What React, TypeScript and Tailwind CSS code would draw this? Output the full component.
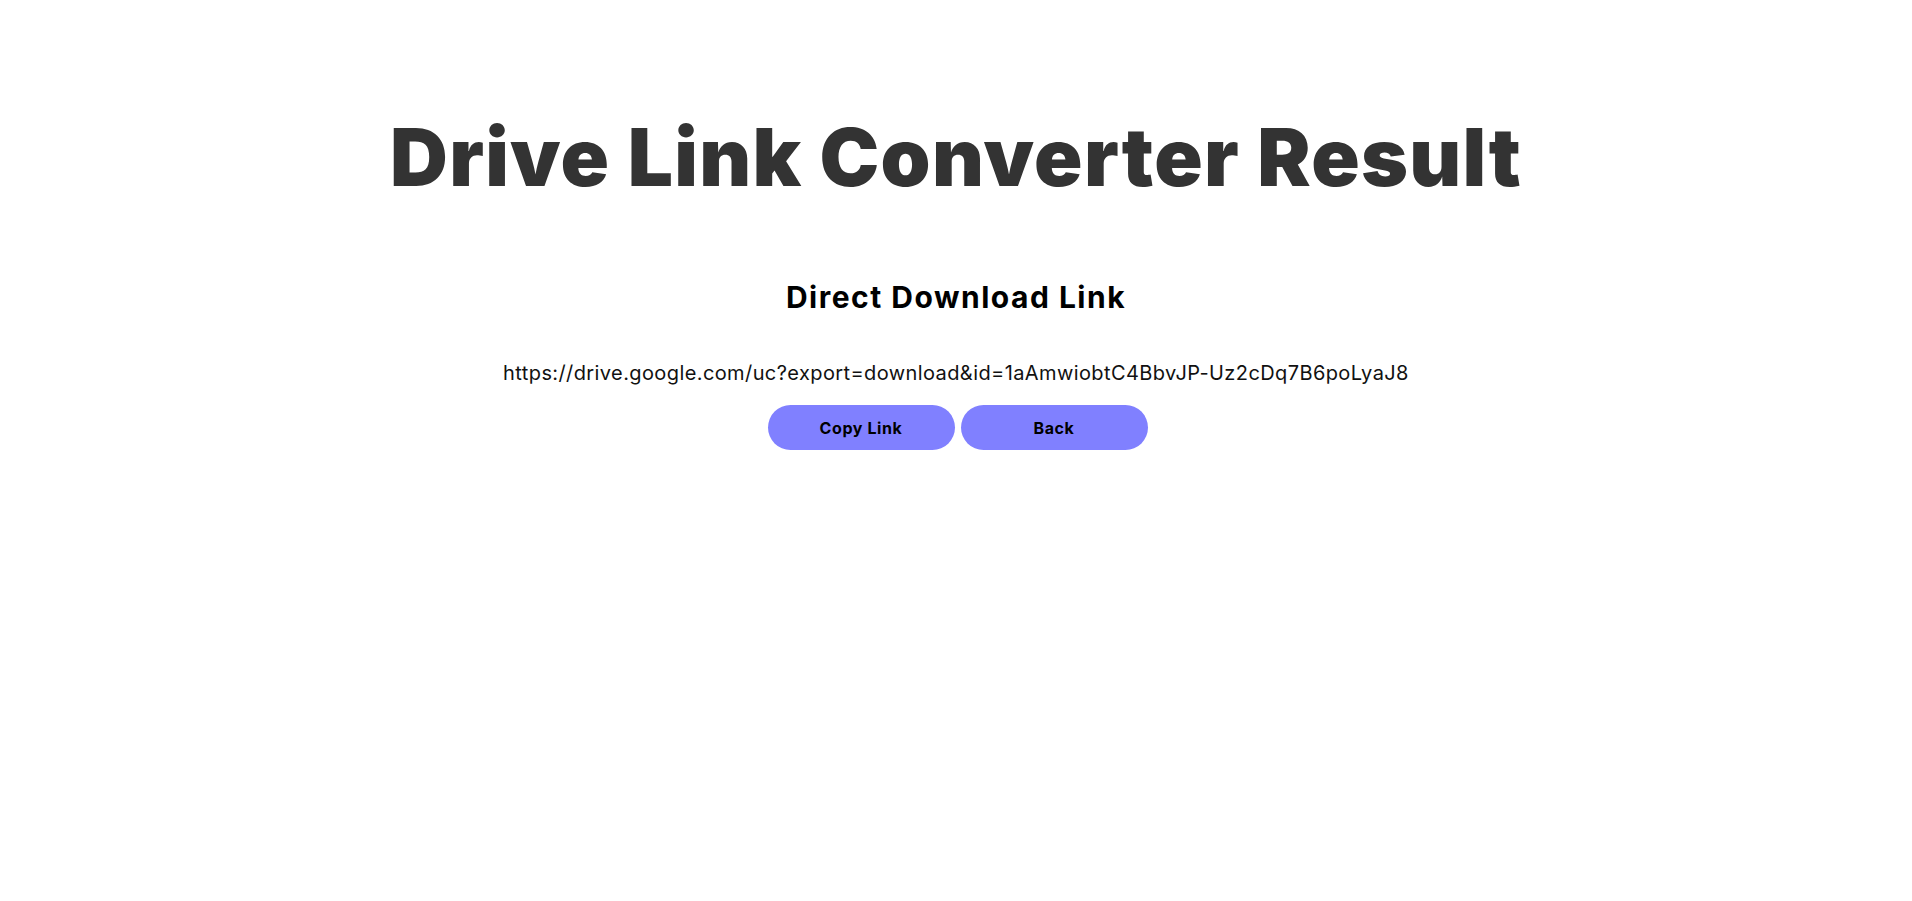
import React from "react";

export default function App() {
  return (
    <div className="min-h-screen bg-white flex flex-col items-center">
      <h1 className="mt-[102px] text-[80px] leading-[110px] font-black text-[#333333] tracking-[1.3px] font-['Inter',sans-serif]">
        Drive Link Converter Result
      </h1>
      <h2 className="mt-[65px] text-[30px] leading-[40px] font-bold text-black tracking-[1.5px] font-['Inter',sans-serif]">
        Direct Download Link
      </h2>
      <p className="mt-[42px] text-[20px] leading-[28px] text-[#111] tracking-[0.4px] font-['Inter',sans-serif]">
        https://drive.google.com/uc?export=download&amp;id=1aAmwiobtC4BbvJP-Uz2cDq7B6poLyaJ8
      </p>
      <div className="mt-[18px] ml-[3px] flex gap-[6px]">
        <button className="w-[187px] h-[45px] rounded-full bg-[#8080ff] text-black font-bold text-[16px] tracking-[0.6px] font-['Inter',sans-serif]">
          Copy Link
        </button>
        <button className="w-[187px] h-[45px] rounded-full bg-[#8080ff] text-black font-bold text-[16px] tracking-[0.6px] font-['Inter',sans-serif]">
          Back
        </button>
      </div>
    </div>
  );
}
